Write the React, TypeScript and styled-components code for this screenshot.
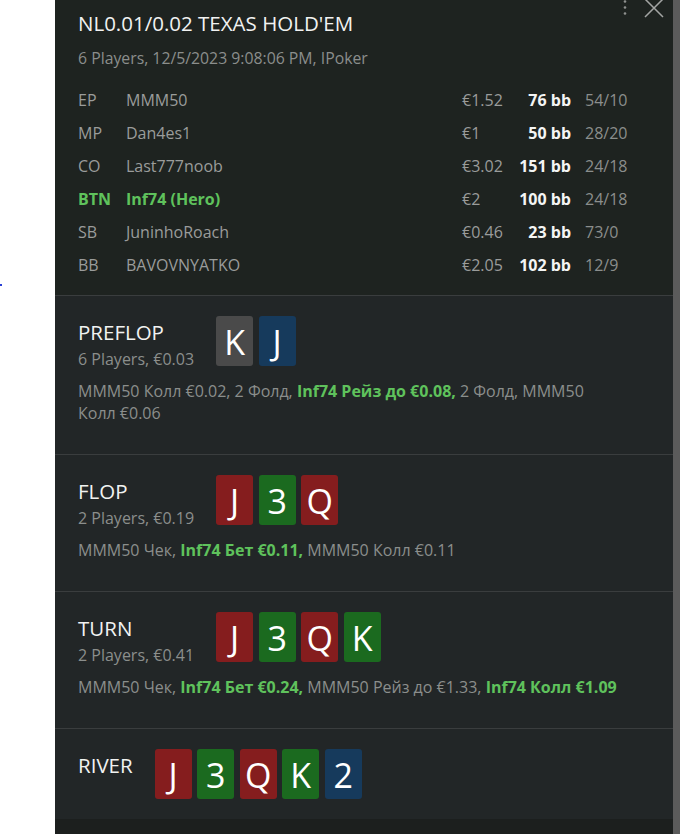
import React from 'react'
import styled, { createGlobalStyle } from 'styled-components'

const GlobalStyle = createGlobalStyle`
  html, body {
    margin: 0;
    padding: 0;
    background: #ffffff;
  }
  body {
    font-family: "Open Sans", "Noto Sans", sans-serif;
  }
`

type CardColor = 'red' | 'green' | 'blue' | 'grey'

type Card = {
    rank: string
    color: CardColor
}

type Action = {
    text: string
    hero?: boolean
}

type Street = {
    name: string
    info?: string
    cards: Card[]
    actions?: Action[]
}

type Player = {
    pos: string
    name: string
    stack: string
    bb: string
    stats: string
    hero?: boolean
}

const players: Player[] = [
    { pos: 'EP', name: 'MMM50', stack: '€1.52', bb: '76 bb', stats: '54/10' },
    { pos: 'MP', name: 'Dan4es1', stack: '€1', bb: '50 bb', stats: '28/20' },
    { pos: 'CO', name: 'Last777noob', stack: '€3.02', bb: '151 bb', stats: '24/18' },
    { pos: 'BTN', name: 'Inf74 (Hero)', stack: '€2', bb: '100 bb', stats: '24/18', hero: true },
    { pos: 'SB', name: 'JuninhoRoach', stack: '€0.46', bb: '23 bb', stats: '73/0' },
    { pos: 'BB', name: 'BAVOVNYATKO', stack: '€2.05', bb: '102 bb', stats: '12/9' },
]

const board: Card[] = [
    { rank: 'J', color: 'red' },
    { rank: '3', color: 'green' },
    { rank: 'Q', color: 'red' },
    { rank: 'K', color: 'green' },
    { rank: '2', color: 'blue' },
]

const streets: Street[] = [
    {
        name: 'PREFLOP',
        info: '6 Players, €0.03',
        cards: [{ rank: 'K', color: 'grey' }, { rank: 'J', color: 'blue' }],
        actions: [
            { text: 'MMM50 Колл €0.02, 2 Фолд, ' },
            { text: 'Inf74 Рейз до €0.08,', hero: true },
            { text: ' 2 Фолд, MMM50 Колл €0.06' },
        ],
    },
    {
        name: 'FLOP',
        info: '2 Players, €0.19',
        cards: board.slice(0, 3),
        actions: [
            { text: 'MMM50 Чек, ' },
            { text: 'Inf74 Бет €0.11,', hero: true },
            { text: ' MMM50 Колл €0.11' },
        ],
    },
    {
        name: 'TURN',
        info: '2 Players, €0.41',
        cards: board.slice(0, 4),
        actions: [
            { text: 'MMM50 Чек, ' },
            { text: 'Inf74 Бет €0.24,', hero: true },
            { text: ' MMM50 Рейз до €1.33, ' },
            { text: 'Inf74 Колл €1.09', hero: true },
        ],
    },
    {
        name: 'RIVER',
        cards: board,
    },
]

const cardColors: Record<CardColor, string> = {
    red: '#851d1e',
    green: '#1b6a1f',
    blue: '#163a5c',
    grey: '#4a4a4a',
}

const Page = styled.div`
  display: flex;
  min-height: 834px;
  background: #ffffff;
`

const Gutter = styled.div`
  width: 55px;
  flex-shrink: 0;
  padding-top: 284px;
  box-sizing: border-box;
`

const Caret = styled.span`
  display: block;
  width: 2px;
  height: 2px;
  background: #2a3fd6;
`

const Drawer = styled.div`
  flex: 1;
  display: flex;
  background: #1c1f1e;
`

const Content = styled.div`
  flex: 1;
  display: flex;
  flex-direction: column;
`

const Scrollbar = styled.div`
  width: 7px;
  flex-shrink: 0;
  background: #5b5b5b;
`

const Header = styled.div`
  position: relative;
  padding: 9px 23px 14px;
  background: #1e2320;
`

const HeaderTools = styled.div`
  position: absolute;
  top: 0;
  right: 9px;
  display: flex;
  align-items: flex-start;
  gap: 16px;
`

const Title = styled.div`
  font-size: 20.5px;
  line-height: 28px;
  color: #f1f2f1;
`

const SubTitle = styled.div`
  margin-top: 10px;
  font-size: 15.8px;
  line-height: 22px;
  color: #8b8e8c;
`

const PlayerTable = styled.div`
  margin-top: 14px;
  display: grid;
  grid-template-columns: 48px 336px 55px 54px 1fr;
  grid-auto-rows: 33px;
  align-items: center;
  font-size: 16px;
`

const Cell = styled.span<{ $hero?: boolean }>`
  color: ${p => (p.$hero ? '#5fc25c' : '#9a9c9b')};
  font-weight: ${p => (p.$hero ? 700 : 400)};
  white-space: nowrap;
`

const BbCell = styled.span`
  color: #f4f5f4;
  font-weight: 700;
  text-align: right;
  white-space: nowrap;
`

const StatCell = styled.span`
  color: #8b8e8c;
  padding-left: 14px;
  white-space: nowrap;
`

const Section = styled.div`
  padding: 20px 23px 20px;
  border-top: 1px solid #3a3d3e;
  background: #222627;
`

const StreetRow = styled.div`
  display: flex;
  align-items: flex-start;
  gap: 22px;
`

const StreetLabel = styled.div`
  display: flex;
  flex-direction: column;
`

const StreetName = styled.div`
  font-size: 20.5px;
  line-height: 30px;
  padding-top: 1px;
  color: #f1f2f1;
`

const StreetInfo = styled.div`
  margin-top: 1px;
  font-size: 16px;
  line-height: 22px;
  color: #8b8e8c;
`

const Cards = styled.div`
  display: flex;
  gap: 5.5px;
`

const CardBox = styled.div<{ $color: CardColor }>`
  width: 37px;
  height: 50px;
  border-radius: 3px;
  background: ${p => cardColors[p.$color]};
  color: #ffffff;
  font-size: 34px;
  line-height: 1;
  display: flex;
  align-items: center;
  justify-content: center;
  padding-top: 2px;
  box-sizing: border-box;
`

const Actions = styled.div`
  margin: 10px 0 10px;
  font-size: 16px;
  line-height: 22px;
  color: #8b8e8c;
  max-width: 542px;
`

const HeroAction = styled.span`
  color: #5fc25c;
  font-weight: 700;
`

const DotsIcon = () => (
    <svg width="6" height="17" viewBox="0 0 6 17">
        <circle cx="3" cy="1.5" r="1.3" fill="#8f918f" />
        <circle cx="3" cy="7.5" r="1.3" fill="#8f918f" />
        <circle cx="3" cy="13.5" r="1.3" fill="#8f918f" />
    </svg>
)

const CloseIcon = () => (
    <svg width="20" height="18" viewBox="0 0 20 18">
        <path d="M1 -1 L19 17 M19 -1 L1 17" stroke="#a3a5a3" strokeWidth="1.5" fill="none" />
    </svg>
)

export default function App() {
    return (
        <>
            <GlobalStyle />
            <Page>
                <Gutter>
                    <Caret />
                </Gutter>
                <Drawer>
                    <Content>
                        <Header>
                            <HeaderTools>
                                <DotsIcon />
                                <CloseIcon />
                            </HeaderTools>
                            <Title>NL0.01/0.02 TEXAS HOLD'EM</Title>
                            <SubTitle>6 Players, 12/5/2023 9:08:06 PM, IPoker</SubTitle>
                            <PlayerTable>
                                {players.map(p => (
                                    <React.Fragment key={p.pos}>
                                        <Cell $hero={p.hero}>{p.pos}</Cell>
                                        <Cell $hero={p.hero}>{p.name}</Cell>
                                        <Cell>{p.stack}</Cell>
                                        <BbCell>{p.bb}</BbCell>
                                        <StatCell>{p.stats}</StatCell>
                                    </React.Fragment>
                                ))}
                            </PlayerTable>
                        </Header>
                        {streets.map(s => (
                            <Section key={s.name}>
                                <StreetRow>
                                    <StreetLabel>
                                        <StreetName>{s.name}</StreetName>
                                        {s.info && <StreetInfo>{s.info}</StreetInfo>}
                                    </StreetLabel>
                                    <Cards>
                                        {s.cards.map((c, i) => (
                                            <CardBox key={i} $color={c.color}>{c.rank}</CardBox>
                                        ))}
                                    </Cards>
                                </StreetRow>
                                {s.actions && (
                                    <Actions>
                                        {s.actions.map((a, i) =>
                                            a.hero ? <HeroAction key={i}>{a.text}</HeroAction> : <span key={i}>{a.text}</span>
                                        )}
                                    </Actions>
                                )}
                            </Section>
                        ))}
                    </Content>
                    <Scrollbar />
                </Drawer>
            </Page>
        </>
    )
}
